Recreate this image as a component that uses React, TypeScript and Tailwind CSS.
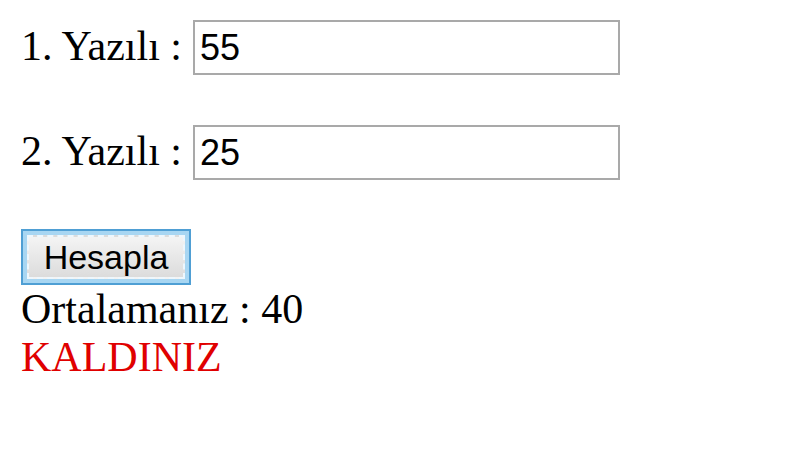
import { useState } from 'react';

export default function App() {
  const [first, setFirst] = useState('55');
  const [second, setSecond] = useState('25');

  const serif = "font-['Liberation_Serif','Times_New_Roman',serif]";
  const inputCls =
    "w-[427px] h-[55px] border-2 border-[#a9a9a9] bg-white px-[5px] text-[36px] text-black font-['Liberation_Sans',Arial,sans-serif] outline-none";

  return (
    <div className={`min-h-[455px] w-[810px] bg-white pl-[21px] pt-[20px] text-black ${serif}`}>
      <div className="flex items-center gap-[11px]">
        <span className="text-[42px] leading-[48px] mt-[-4px]">1. Yazılı :</span>
        <input className={inputCls} value={first} onChange={(e) => setFirst(e.target.value)} />
      </div>

      <div className="mt-[50px] flex items-center gap-[11px]">
        <span className="text-[42px] leading-[48px] mt-[-4px]">2. Yazılı :</span>
        <input className={inputCls} value={second} onChange={(e) => setSecond(e.target.value)} />
      </div>

      <div className="mt-[49px]">
        <button className="flex h-[56px] w-[170px] items-stretch border-[2px] border-[#4f9fd4] bg-[#a8d6f2] p-[4px]">
          <span className="flex flex-1 items-center justify-center border-[2px] border-dashed border-[#eef7fd] bg-gradient-to-b from-[#f4f4f4] to-[#dcdcdc] text-[34px] text-black font-['Liberation_Sans',Arial,sans-serif]">
            Hesapla
          </span>
        </button>
      </div>

      <div className="text-[42px] leading-[48px]">Ortalamanız : 40</div>
      <div className="text-[42px] leading-[48px] text-[#e00000]">KALDINIZ</div>
    </div>
  );
}
